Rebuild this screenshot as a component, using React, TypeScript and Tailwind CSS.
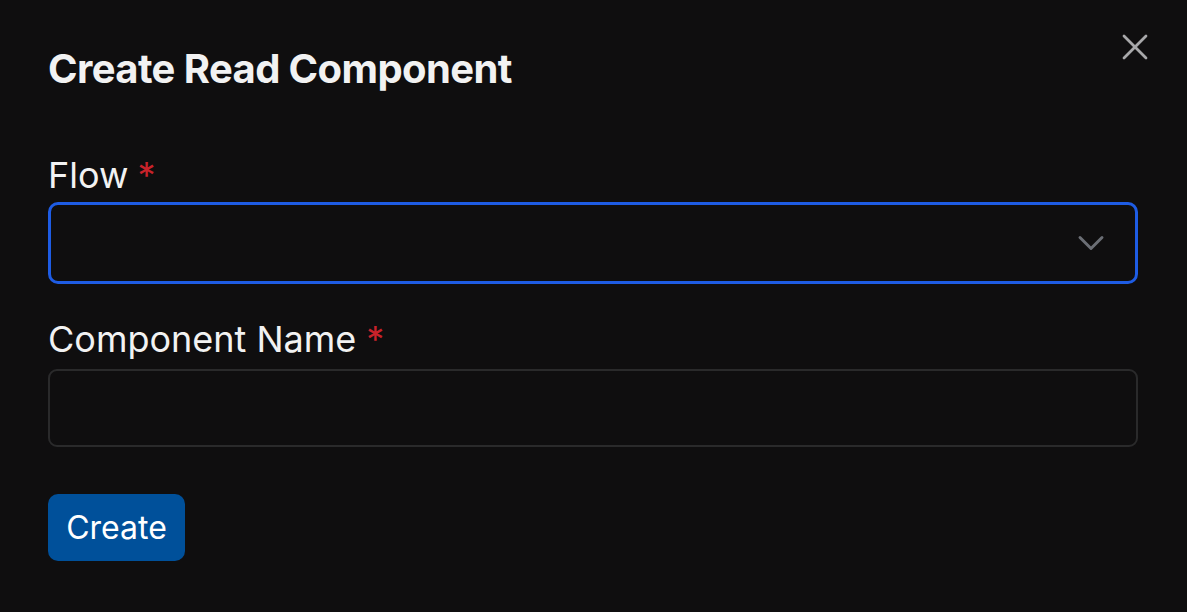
import { X, ChevronDown } from "lucide-react";

export default function App() {
  return (
    <div
      className="relative h-[612px] w-[1187px] overflow-hidden bg-[#0f0e0f] text-[#f2f2f2]"
      style={{ fontFamily: "Inter, 'Noto Sans', sans-serif" }}
    >
      <button className="absolute right-[30px] top-[25px] text-[#a8a8aa]">
        <X size={44} strokeWidth={1.5} />
      </button>

      <div className="px-[48px] pt-[44px] pr-[49px]">
        <h2 className="text-[40px] font-bold leading-[50px] tracking-[-0.6px]">Create Read Component</h2>

        <div className="mt-[59px]">
          <label className="flex items-center text-[36px] leading-[44px]">
            Flow
            <span className="ml-[9px] text-[#c8222a]">*</span>
          </label>
          <div className="mt-[5px] flex h-[82px] items-center justify-end rounded-[10px] border-[3px] border-[#1e5ce4] pr-[22px]">
            <ChevronDown size={44} strokeWidth={1.6} className="text-[#6b6e75]" />
          </div>
        </div>

        <div className="mt-[33px]">
          <label className="flex items-center text-[36px] leading-[44px]">
            Component Name
            <span className="ml-[10px] text-[#c8222a]">*</span>
          </label>
          <div className="mt-[8px] h-[78px] rounded-[9px] border-2 border-[#2a2a2b]" />
        </div>

        <button className="mt-[47px] h-[67px] w-[137px] rounded-[10px] bg-[#00509a] text-[32px] text-white">
          Create
        </button>
      </div>
    </div>
  );
}
